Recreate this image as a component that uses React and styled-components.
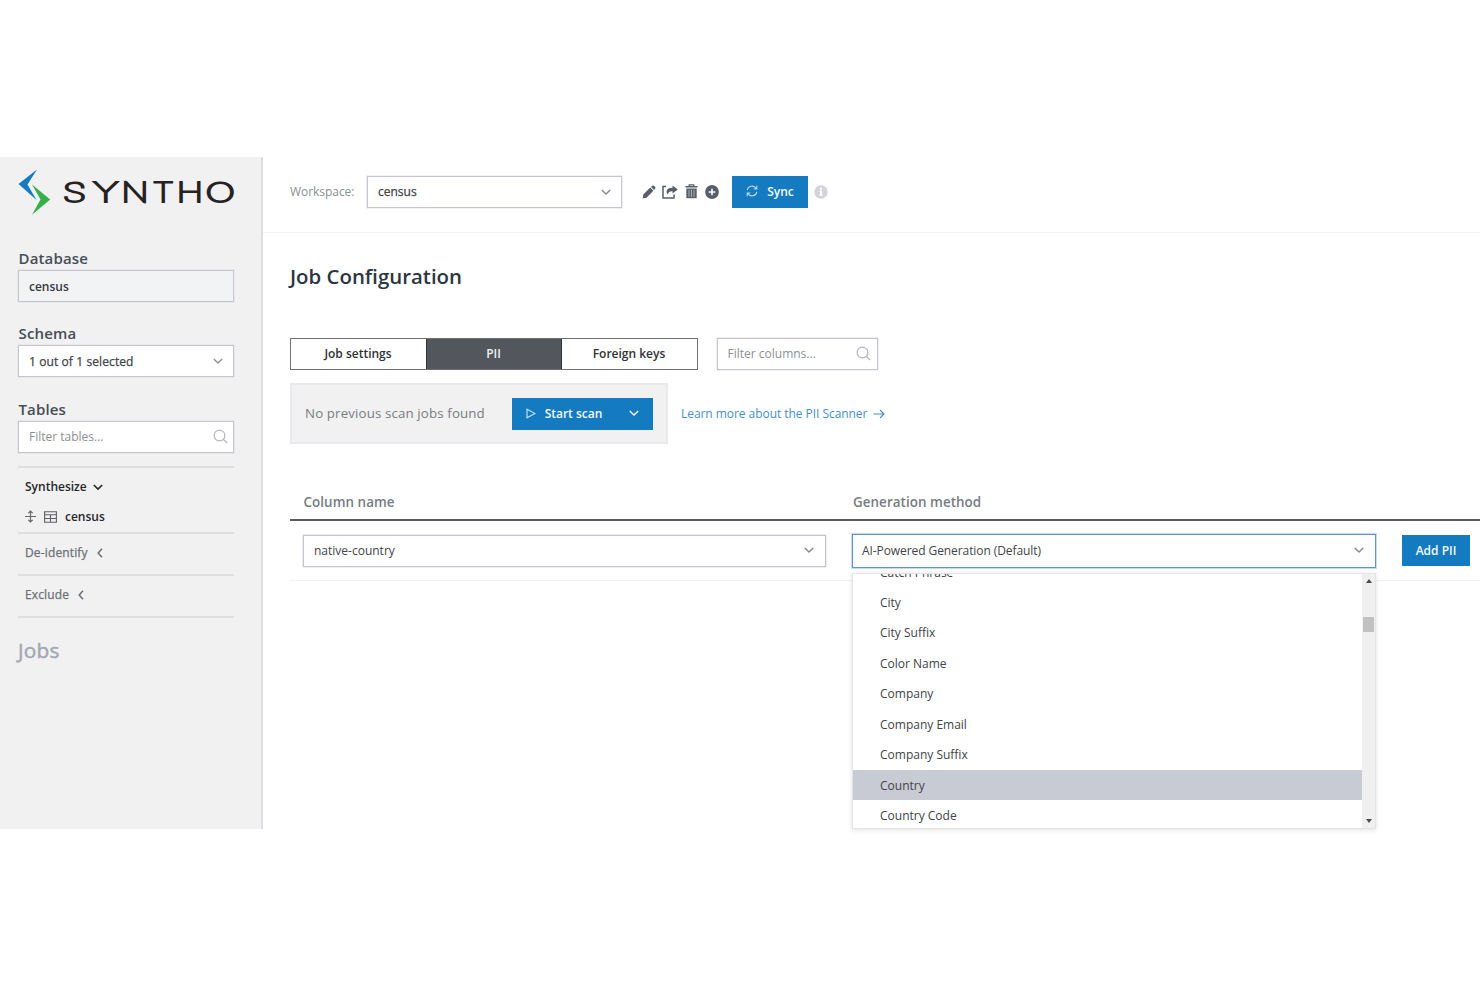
import React from 'react';
import styled, { createGlobalStyle } from 'styled-components';

const GlobalStyle = createGlobalStyle`
  *, *::before, *::after { box-sizing: border-box; }
  body { margin: 0; background: #fff; font-family: "Open Sans", "Noto Sans", sans-serif; font-size: 12px; color: #3f444a; }
  svg { display: block; flex: none; }
`;

const Page = styled.div`
  height: 987px;
  padding: 157px 0 158px;
  overflow: hidden;
`;
const Shell = styled.div`
  display: flex;
  height: 672px;
`;
const Sidebar = styled.aside`
  width: 263px;
  flex: none;
  padding: 12px 27px 0 18px;
  background: #f1f1f1;
  border-right: 2px solid #dddee4;
`;
const LogoRow = styled.div`
  height: 80px;
`;
const FieldLabel = styled.div`
  height: 21px;
  line-height: 19px;
  font-size: 15px;
  font-weight: 600;
  color: #464d56;
  letter-spacing: .15px;
  padding-left: .5px;
`;
const Field = styled.div`
  display: flex;
  align-items: center;
  justify-content: space-between;
  width: ${p => p.$w || 'auto'};
  height: ${p => p.$h || '32px'};
  padding: 0 ${p => p.$pr || '11px'} ${p => p.$pb || '1px'} ${p => (p.$active ? '9px' : '10px')};
  margin-bottom: ${p => p.$mb || '0'};
  border: ${p => (p.$active ? '1.5px solid #6391d6' : '1px solid #c4c6ce')};
  box-shadow: ${p => (p.$active ? '0 0 0 1px #c5daf5' : '0 0 0 .5px #dfe0e6')};
  background: ${p => p.$bg || '#fff'};
  color: ${p => p.$color || '#3f4449'};
  font-weight: ${p => p.$weight || 400};
  -webkit-text-stroke: ${p => (p.$medium ? '.25px' : '0')};
  letter-spacing: ${p => p.$ls || '0'};
  white-space: nowrap;
`;
const Group = styled.div`
  height: ${p => p.$h};
  border-top: 2px solid #dfdfe0;
  padding: 10px 0 0 7px;
`;
const GroupLine = styled.div`
  display: flex;
  align-items: center;
  height: 18px;
  gap: ${p => p.$gap || '7px'};
  margin-bottom: 12px;
  color: ${p => p.$color || '#26282b'};
  font-weight: ${p => (p.$medium ? 400 : 600)};
  letter-spacing: ${p => (p.$medium ? '.14px' : '0')};
  -webkit-text-stroke: ${p => (p.$medium ? '.25px' : '0')};
`;
const JobsLink = styled.div`
  height: 60px;
  padding-top: 17px;
  border-top: 2px solid #dfdfe0;
  line-height: 30px;
  font-size: 20.8px;
  letter-spacing: .2px;
  -webkit-text-stroke: .5px;
  color: #a3a8b3;
`;
const Main = styled.main`
  flex: 1;
  min-width: 0;
`;
const TopBar = styled.header`
  display: flex;
  align-items: center;
  height: 76px;
  padding: 0 0 6px 27px;
  border-bottom: 1px solid #f0f1f2;
`;
const TopLabel = styled.span`
  width: 77px;
  color: #8a8f94;
  letter-spacing: -.05px;
`;
const IconStrip = styled.div`
  display: flex;
  align-items: center;
  gap: 6.8px;
  margin: 0 13px 0 19.6px;
  color: #5a5f67;
`;
const Button = styled.button`
  display: flex;
  align-items: center;
  justify-content: center;
  width: ${p => p.$w};
  height: ${p => p.$h || '32px'};
  padding: 0 0 1px;
  gap: 9px;
  border: 0;
  background: #147bc0;
  color: #f4f9fd;
  font: 600 12px "Open Sans", sans-serif;
`;
const InfoSlot = styled.span`
  margin-left: 6px;
`;
const Content = styled.section`
  padding-left: 27px;
`;
const Title = styled.h1`
  height: 74px;
  margin: 0;
  padding: 28px 0 0;
  line-height: 30px;
  font-size: 20.4px;
  font-weight: 600;
  color: #2c3542;
`;
const TabRow = styled.div`
  display: flex;
  gap: 19px;
  margin-top: 31px;
`;
const Tabs = styled.div`
  display: flex;
  width: 407.5px;
  height: 32px;
  border: 1px solid #6e7073;
`;
const Tab = styled.div`
  flex: 1;
  display: flex;
  align-items: center;
  justify-content: center;
  padding: 0 .5px 1px 0;
  font-weight: 600;
  color: ${p => (p.$on ? '#eef0f2' : '#2f3236')};
  background: ${p => (p.$on ? '#53575d' : '#fff')};
  border: solid #303338;
  border-width: ${p => (p.$on ? '0 1px' : '0')};
`;
const ScanRow = styled.div`
  display: flex;
  align-items: center;
  gap: 13px;
  margin-top: 13px;
`;
const ScanBox = styled.div`
  display: flex;
  align-items: center;
  justify-content: space-between;
  width: 378px;
  height: 61px;
  padding: 0 13px;
  border: 2px solid #e8e9ec;
  background: #f1f1f1;
  color: #787d82;
  font-size: 13.3px;
  letter-spacing: .13px;
`;
const ScanStatus = styled.span`
  padding-bottom: 1px;
`;
const ScanLink = styled.a`
  display: flex;
  align-items: center;
  gap: 6px;
  color: #4590cc;
  letter-spacing: -.05px;
`;
const ButtonText = styled.span`
  margin-right: 18px;
`;
const HeadRow = styled.div`
  display: grid;
  grid-template-columns: 549.5px 1fr;
  height: 33px;
  margin-top: 44px;
  padding: 4px 0 0 13.5px;
  border-bottom: 2px solid #595b5e;
  line-height: 21px;
  font-size: 13.4px;
  letter-spacing: .06px;
  font-weight: 600;
  color: #767c83;
`;
const Row = styled.div`
  display: grid;
  grid-template-columns: 523px 524px 68px;
  gap: 26px;
  align-items: center;
  height: 60px;
  padding-left: 13px;
  border-bottom: 1px solid #f3f3f4;
`;
const SelectWrap = styled.div`
  position: relative;
`;
const Menu = styled.div`
  position: absolute;
  top: 39px;
  left: 0;
  display: flex;
  width: 524px;
  height: 256px;
  border: 1px solid #e3e4e6;
  box-shadow: 0 1px 5px rgba(0, 0, 0, .12);
  background: #fff;
  overflow: hidden;
`;
const Options = styled.div`
  flex: 1;
  display: flex;
  flex-direction: column;
  justify-content: flex-end;
  margin-bottom: -3px;
`;
const Option = styled.div`
  flex: none;
  height: 30.45px;
  padding-left: 27px;
  line-height: 31px;
  background: ${p => (p.$on ? '#c8cad4' : 'transparent')};
  color: #404448;
`;
const ScrollTrack = styled.div`
  display: flex;
  flex-direction: column;
  align-items: center;
  justify-content: space-between;
  width: 13px;
  padding: 5px 0 5px;
  background: #f0f0f0;
`;
const Thumb = styled.div`
  width: 11px;
  height: 15px;
  margin: 34px 0 auto;
  background: #c1c1c1;
`;
const Triangle = styled.div`
  border: 3px solid transparent;
  border-top: ${p => (p.$up ? '0' : '4px solid #4c4c4c')};
  border-bottom: ${p => (p.$up ? '4px solid #4c4c4c' : '0')};
`;

const wordmark = [
  ['S', 44.5, 24], ['Y', 75, 25.5], ['N', 103.3, 27.5], ['T', 134.5, 21.5], ['H', 158.6, 26.8], ['O', 187.3, 30],
];

const Logo = () => (
  <svg width="218" height="48" viewBox="0 0 218 48" aria-label="Syntho">
    <path d="M19 0.500 L0.500 15 L18.500 31 L9.500 15.500 Z" fill="#1779be" />
    <path d="M14 15.500 L32.200 30.500 L14 45.800 L22.500 30.500 Z" fill="#35b04b" />
    <g fontFamily="Inter, sans-serif" fontSize="26.500" fontWeight="100" fill="#262223" stroke="#262223" strokeWidth="1.900">
      {wordmark.map(([letter, x, length]) => (
        <text key={letter} x={x} y="33" textLength={length} lengthAdjust="spacingAndGlyphs">{letter}</text>
      ))}
    </g>
  </svg>
);

const Chevron = ({ left, color = 'currentColor', sw = 1.5 }) => (
  <svg width="10" height="10" viewBox="0 0 10 10" fill="none" stroke={color} strokeWidth={sw}>
    <path d={left ? 'M7 .8 L3.200 5 L7 9.200' : 'M.8 3 L5 7 L9.200 3'} />
  </svg>
);
const Search = () => (
  <svg width="15" height="15" viewBox="0 0 15 15" fill="none" stroke="#b3b6bd" strokeWidth="1.200">
    <circle cx="6.500" cy="6.500" r="5.400" />
    <path d="M10.500 10.500 L14.200 14" />
  </svg>
);
const Move = () => (
  <svg width="11" height="13" viewBox="0 0 11 13" fill="none" stroke="#66696e" strokeWidth="1.200">
    <path d="M0 6.500 H11 M5.500 1 V12 M3.300 3.200 L5.500 1 L7.700 3.200 M3.300 9.800 L5.500 12 L7.700 9.800" />
  </svg>
);
const TableIcon = () => (
  <svg width="13" height="12" viewBox="0 0 13 12" fill="none" stroke="#5d6065" strokeWidth="1.100">
    <path d="M.6 .7 H12.400 V11.300 H.6 Z M.6 3.700 H12.400 M.6 7.500 H12.400 M6.500 3.700 V11.300" />
  </svg>
);
const Pencil = () => (
  <svg width="14" height="14" viewBox="0 0 14 14" fill="currentColor">
    <path d="M.6 13.400 L1.300 9.500 L8.200 2.600 L11.400 5.800 L4.500 12.700 Z M9 1.900 L10.400 .7 Q11.200 .1 11.900 .8 L13.200 2.100 Q13.800 2.800 13.200 3.600 L12.100 5 Z" />
  </svg>
);
const Share = () => (
  <svg width="16" height="14" viewBox="0 0 16 14">
    <path d="M4 1.500 H1 V13 H12 V9.500" fill="none" stroke="currentColor" strokeWidth="1.500" />
    <path d="M10.500 .4 L15.800 4.500 L10.500 8.600 V6.300 C7.600 6.200 6.200 7 6 9.800 C3 6.200 5 2.700 10.500 2.700 Z" fill="currentColor" />
  </svg>
);
const Trash = () => (
  <svg width="13" height="15" viewBox="0 0 13 15">
    <path d="M.4 2.700 H12.600 M4.300 2.300 V.9 H8.700 V2.300" fill="none" stroke="currentColor" strokeWidth="1.400" />
    <path d="M1.300 4.500 H11.700 V14.200 H1.300 Z" fill="currentColor" />
    <path d="M4 5.800 V12.800 M6.500 5.800 V12.800 M9 5.800 V12.800" stroke="#c3c5c9" strokeWidth=".8" />
  </svg>
);
const PlusCircle = () => (
  <svg width="14" height="14" viewBox="0 0 14 14">
    <circle cx="7" cy="7" r="6.900" fill="currentColor" />
    <path d="M7 3.700 V10.300 M3.700 7 H10.300" stroke="#fff" strokeWidth="1.600" />
  </svg>
);
const SyncIcon = () => (
  <svg width="12" height="12" viewBox="0 0 12 12" fill="none" stroke="#b9dcf3" strokeWidth="1.100">
    <path d="M1.200 5.200 A4.900 4.900 0 0 1 10.300 3.700 M10.800 .8 V4 H7.700 M10.800 6.800 A4.900 4.900 0 0 1 1.700 8.300 M1.200 11.200 V8 H4.300" />
  </svg>
);
const Info = () => (
  <svg width="14" height="14" viewBox="0 0 14 14">
    <circle cx="7" cy="7" r="6.700" fill="#d2d4d8" />
    <path d="M6 2.800 H8 V4.700 H6 Z M5.300 5.700 H8 V9.500 H8.800 V10.700 H5.300 V9.500 H6.100 V6.900 H5.300 Z" fill="#fff" />
  </svg>
);
const Play = () => (
  <svg width="10" height="11" viewBox="0 0 10 11" fill="none" stroke="#c9e3f5" strokeWidth="1.100">
    <path d="M1 1.200 L9 5.500 L1 9.800 Z" />
  </svg>
);
const Arrow = () => (
  <svg width="12" height="10" viewBox="0 0 12 10" fill="none" stroke="currentColor" strokeWidth="1.100">
    <path d="M.5 5 H11 M7 1 L11 5 L7 9" />
  </svg>
);

const options = ['Catch Phrase', 'City', 'City Suffix', 'Color Name', 'Company', 'Company Email', 'Company Suffix', 'Country', 'Country Code'];

export default function App() {
  return (
    <Page>
      <GlobalStyle />
      <Shell>
        <Sidebar>
          <LogoRow><Logo /></LogoRow>
          <FieldLabel>Database</FieldLabel>
          <Field $bg="#f2f3f5" $weight={600} $pb="0px" $mb="22.400px" $color="#36393e">census</Field>
          <FieldLabel>Schema</FieldLabel>
          <Field $medium $ls=".1px" $pb="0px" $mb="22.600px" $pr="10px"><span>1 out of 1 selected</span><Chevron color="#8d919b" /></Field>
          <FieldLabel>Tables</FieldLabel>
          <Field $color="#8b9094" $pr="5px" $pb="0px" $mb="13px"><span>Filter tables...</span><Search /></Field>
          <Group $h="66px">
            <GroupLine $gap="6px"><span>Synthesize</span><Chevron sw={1.7} /></GroupLine>
            <GroupLine $gap="8px"><Move /><TableIcon /><span>census</span></GroupLine>
          </Group>
          <Group $h="42px">
            <GroupLine $color="#6b6f74" $medium><span>De-identify</span><Chevron left /></GroupLine>
          </Group>
          <Group $h="42px">
            <GroupLine $color="#6b6f74" $medium><span>Exclude</span><Chevron left /></GroupLine>
          </Group>
          <JobsLink>Jobs</JobsLink>
        </Sidebar>
        <Main>
          <TopBar>
            <TopLabel>Workspace:</TopLabel>
            <Field $w="255px" $medium $pb="0px" $pr="10.500px"><span>census</span><Chevron color="#858a94" /></Field>
            <IconStrip><Pencil /><Share /><Trash /><PlusCircle /></IconStrip>
            <Button $w="76px"><SyncIcon />Sync</Button>
            <InfoSlot><Info /></InfoSlot>
          </TopBar>
          <Content>
            <Title>Job Configuration</Title>
            <TabRow>
              <Tabs>
                <Tab>Job settings</Tab>
                <Tab $on>PII</Tab>
                <Tab>Foreign keys</Tab>
              </Tabs>
              <Field $w="161px" $pr="6px" $color="#8b9094"><span>Filter columns...</span><Search /></Field>
            </TabRow>
            <ScanRow>
              <ScanBox>
                <ScanStatus>No previous scan jobs found</ScanStatus>
                <Button $w="141px"><Play /><ButtonText>Start scan</ButtonText><Chevron /></Button>
              </ScanBox>
              <ScanLink><span>Learn more about the PII Scanner</span><Arrow /></ScanLink>
            </ScanRow>
            <HeadRow><span>Column name</span><span>Generation method</span></HeadRow>
            <Row>
              <Field><span>native-country</span><Chevron color="#858a94" /></Field>
              <SelectWrap>
                <Field $active $h="34px" $ls="-.08px"><span>AI-Powered Generation (Default)</span><Chevron color="#858a94" /></Field>
                <Menu>
                  <Options>
                    {options.map(o => <Option key={o} $on={o === 'Country'}>{o}</Option>)}
                  </Options>
                  <ScrollTrack><Triangle $up /><Thumb /><Triangle /></ScrollTrack>
                </Menu>
              </SelectWrap>
              <Button $w="68px" $h="31px">Add PII</Button>
            </Row>
          </Content>
        </Main>
      </Shell>
    </Page>
  );
}
